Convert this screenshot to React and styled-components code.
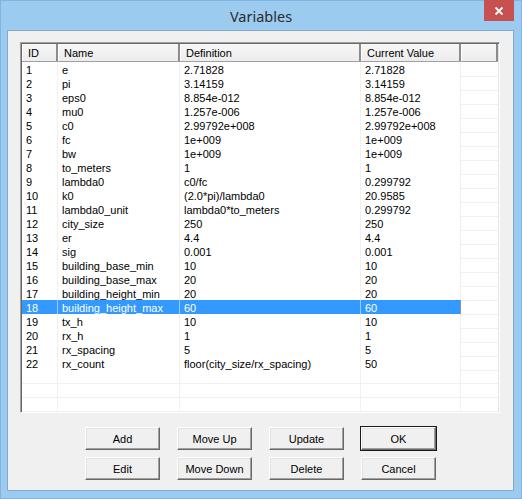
import React from "react";
import styled, { createGlobalStyle } from "styled-components";

const GlobalStyle = createGlobalStyle`
  html, body { margin: 0; padding: 0; background: #9ccbf0; }
  * { box-sizing: border-box; }
`;

const COLS = "36px 122px 181px 100px 1fr";

const rows = [
  ["1", "e", "2.71828", "2.71828"],
  ["2", "pi", "3.14159", "3.14159"],
  ["3", "eps0", "8.854e-012", "8.854e-012"],
  ["4", "mu0", "1.257e-006", "1.257e-006"],
  ["5", "c0", "2.99792e+008", "2.99792e+008"],
  ["6", "fc", "1e+009", "1e+009"],
  ["7", "bw", "1e+009", "1e+009"],
  ["8", "to_meters", "1", "1"],
  ["9", "lambda0", "c0/fc", "0.299792"],
  ["10", "k0", "(2.0*pi)/lambda0", "20.9585"],
  ["11", "lambda0_unit", "lambda0*to_meters", "0.299792"],
  ["12", "city_size", "250", "250"],
  ["13", "er", "4.4", "4.4"],
  ["14", "sig", "0.001", "0.001"],
  ["15", "building_base_min", "10", "10"],
  ["16", "building_base_max", "20", "20"],
  ["17", "building_height_min", "20", "20"],
  ["18", "building_height_max", "60", "60"],
  ["19", "tx_h", "10", "10"],
  ["20", "rx_h", "1", "1"],
  ["21", "rx_spacing", "5", "5"],
  ["22", "rx_count", "floor(city_size/rx_spacing)", "50"],
];

const Window = styled.div`
  width: 522px;
  height: 499px;
  background: #9ccbf0;
  border: 1px solid #83b3e2;
  display: flex;
  flex-direction: column;
  font-family: "Liberation Sans", Arial, sans-serif;
`;

const TitleBar = styled.div`
  height: 29px;
  display: grid;
  grid-template-columns: 37px 1fr 37px;
  align-items: start;
`;

const Title = styled.div`
  grid-column: 2;
  text-align: center;
  font-family: "Noto Sans", "Open Sans", sans-serif;
  font-size: 14.5px;
  color: #2b2b2b;
  line-height: 30px;
`;

const CloseButton = styled.div`
  grid-column: 3;
  width: 30px;
  height: 21px;
  margin-top: -1px;
  background: #c75050;
  color: #fff;
  display: flex;
  align-items: center;
  justify-content: center;
`;

const Client = styled.div`
  flex: 1;
  margin: 0 7px 7px 6px;
  background: #f0f0f0;
  border: 1px solid #86a8cc;
  padding: 11px 12px 0 12px;
  display: flex;
  flex-direction: column;
`;

const ListView = styled.div`
  width: 480px;
  height: 371px;
  background: #fff;
  border-top: 1px solid #a0a0a0;
  border-left: 1px solid #a0a0a0;
  border-right: 1px solid #fff;
  border-bottom: 1px solid #fff;
  box-shadow: inset 1px 1px 0 #696969, inset -1px -1px 0 #e3e3e3;
  padding: 1px;
  overflow: hidden;
  font-size: 11px;
  color: #000;
`;

const HeaderRow = styled.div`
  display: grid;
  grid-template-columns: ${COLS};
  height: 18px;
  background: linear-gradient(#f7f7f7, #ececec);
  border-bottom: 1px solid #a0a0a0;
`;

const HeaderCell = styled.div`
  padding-left: 5px;
  line-height: 18px;
  border-left: 1px solid #fff;
  border-right: 2px solid #8c8c8c;
  white-space: nowrap;
  overflow: hidden;
`;

const Row = styled.div`
  display: grid;
  grid-template-columns: ${COLS};
  height: 14px;
`;

const Cell = styled.div`
  padding: 2px 0 0 4px;
  line-height: 12px;
  white-space: nowrap;
  border-right: 1px solid ${(p) => (p.$selected ? "#9ccdff" : "#f0f0f0")};
  border-bottom: 1px solid ${(p) => (p.$selected ? "#3399ff" : "#f0f0f0")};
  background: ${(p) => (p.$selected ? "#3399ff" : "#fff")};
  color: ${(p) => (p.$selected ? "#fff" : "#000")};
  ${(p) => p.$last && p.$selected && "border-right: 1px dotted #d98c3a;"}
`;

const FillerCell = styled.div`
  border-bottom: 1px solid #f0f0f0;
`;

const ButtonGrid = styled.div`
  display: grid;
  grid-template-columns: repeat(4, 75px);
  grid-auto-rows: 23px;
  column-gap: 17px;
  row-gap: 7px;
  margin-top: 14px;
  padding-left: 65px;
`;

const Button = styled.div`
  display: flex;
  align-items: center;
  justify-content: center;
  padding-top: 1px;
  font-size: 11px;
  color: #000;
  background: #f0f0f0;
  border-top: 1px solid #fff;
  border-left: 1px solid #fff;
  border-right: 1px solid #696969;
  border-bottom: 1px solid #696969;
  box-shadow: inset -1px -1px 0 #a0a0a0, inset 1px 1px 0 #e3e3e3;
  ${(p) =>
    p.$default &&
    `
    outline: 1px solid #1a1a1a;
    outline-offset: 0;
  `}
`;

const SELECTED = 17;

export default function App() {
  const empty = 4;
  return (
    <>
      <GlobalStyle />
      <Window>
        <TitleBar>
          <Title>Variables</Title>
          <CloseButton>
            <svg width="10" height="10" viewBox="0 0 10 10">
              <path d="M1.5 1.5 L8.5 8.5 M8.5 1.5 L1.5 8.5" stroke="#fff" strokeWidth="1.8" />
            </svg>
          </CloseButton>
        </TitleBar>
        <Client>
          <ListView>
            <HeaderRow>
              <HeaderCell>ID</HeaderCell>
              <HeaderCell>Name</HeaderCell>
              <HeaderCell>Definition</HeaderCell>
              <HeaderCell>Current Value</HeaderCell>
              <HeaderCell />
            </HeaderRow>
            {rows.map((r, i) => (
              <Row key={r[0]}>
                {r.map((v, j) => (
                  <Cell key={j} $selected={i === SELECTED} $last={j === 3}>
                    {v}
                  </Cell>
                ))}
                <FillerCell />
              </Row>
            ))}
            {Array.from({ length: empty }).map((_, i) => (
              <Row key={"e" + i}>
                <Cell />
                <Cell />
                <Cell />
                <Cell />
                <FillerCell />
              </Row>
            ))}
          </ListView>
          <ButtonGrid>
            <Button>Add</Button>
            <Button>Move Up</Button>
            <Button>Update</Button>
            <Button $default>OK</Button>
            <Button>Edit</Button>
            <Button>Move Down</Button>
            <Button>Delete</Button>
            <Button>Cancel</Button>
          </ButtonGrid>
        </Client>
      </Window>
    </>
  );
}
